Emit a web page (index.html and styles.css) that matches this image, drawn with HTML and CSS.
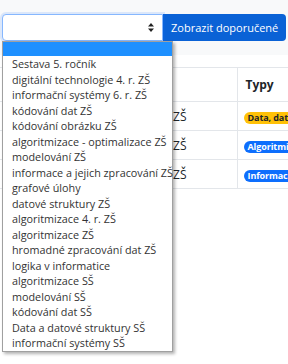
FILE: index.html
```html
<!DOCTYPE html>
<html lang="cs">
  <head>
    <meta charset="UTF-8" />
    <meta name="viewport" content="width=device-width, initial-scale=1.0" />
    <title>Doporučené sestavy</title>
    <link rel="stylesheet" href="styles.css">
  </head>
  <body>
    <div class="page">
      <div class="toolbar">
        <div class="select">
          <svg class="arrows" width="6" height="9" viewBox="0 0 6 9">
            <path d="M3 0 L6 3.5 H0 Z M0 5.5 H6 L3 9 Z" fill="#222" />
          </svg>
        </div>
        <button class="btn">Zobrazit doporučené</button>
      </div>

      <div class="panel">
        <table class="grid">
          <colgroup>
            <col class="col-name" />
            <col class="col-types" />
          </colgroup>
          <thead>
            <tr>
              <th>Název</th>
              <th>Typy</th>
            </tr>
          </thead>
          <tbody>
            <tr>
              <td class="name">Kódování dat ZŠ</td>
              <td><span class="badge yellow">Data, datové struktury</span></td>
            </tr>
            <tr>
              <td class="name">Algoritmizace ZŠ</td>
              <td><span class="badge blue">Algoritmizace</span></td>
            </tr>
            <tr>
              <td class="name">Informační systémy ZŠ</td>
              <td><span class="badge blue">Informace a data</span></td>
            </tr>
          </tbody>
        </table>
      </div>

      <!-- open list of the select -->
      <ul class="dropdown">
        <li class="active">&nbsp;</li>
        <li>Sestava 5. ročník</li>
        <li>digitální technologie 4. r. ZŠ</li>
        <li>informační systémy 6. r. ZŠ</li>
        <li>kódování dat ZŠ</li>
        <li>kódování obrázku ZŠ</li>
        <li>algoritmizace - optimalizace ZŠ</li>
        <li>modelování ZŠ</li>
        <li>informace a jejich zpracování ZŠ</li>
        <li>grafové úlohy</li>
        <li>datové struktury ZŠ</li>
        <li>algoritmizace 4. r. ZŠ</li>
        <li>algoritmizace ZŠ</li>
        <li>hromadné zpracování dat ZŠ</li>
        <li>logika v informatice</li>
        <li>algoritmizace SŠ</li>
        <li>modelování SŠ</li>
        <li>kódování dat SŠ</li>
        <li>Data a datové struktury SŠ</li>
        <li>informační systémy SŠ</li>
      </ul>
    </div>
  </body>
</html>
```

FILE: styles.css
```css
body {
  margin: 0;
  font-family: "Segoe UI", "Open Sans", sans-serif;
  background: #fff;
  color: #212529;
  overflow: hidden;
}
.page {
  position: relative;
  width: 288px;
  height: 364px;
  overflow: hidden;
}
.toolbar {
  display: flex;
  align-items: stretch;
  height: 27px;
  padding: 14px 2px 14px 2px;
  background: #f8f9fa;
}
.select {
  position: relative;
  width: 161px;
  box-sizing: border-box;
  background: #fff;
  border: 1px solid #86b7fe;
  border-radius: 4px 0 0 4px;
  box-shadow: 0 0 0 2px rgba(13, 110, 253, 0.12);
}
.arrows {
  position: absolute;
  right: 8px;
  top: 8px;
}
.btn {
  width: 123px;
  border: none;
  border-radius: 0 4px 4px 0;
  background: #0a62d6;
  color: #fff;
  font-family: inherit;
  font-size: 11px;
  padding: 0 0 0 8px;
  text-align: left;
  white-space: nowrap;
}
.panel {
  background: #fff;
  padding: 12px 0 0 0;
}
.grid {
  border-collapse: collapse;
  table-layout: fixed;
  width: 360px;
  font-size: 12px;
}
.col-name {
  width: 237px;
}
.grid th,
.grid td {
  border: 1px solid #e3e6ea;
  white-space: nowrap;
  overflow: hidden;
  padding: 0 0 0 8px;
  text-align: left;
}
.grid th {
  height: 33px;
  font-weight: 700;
}
.grid td {
  height: 28px;
  padding-left: 6px;
}
.grid th:first-child,
.grid td:first-child {
  border-left: none;
}
.grid .name {
  text-align: right;
  padding: 0 50px 0 0;
}
.badge {
  display: inline-block;
  padding: 0 4px;
  border-radius: 6px;
  font-size: 9px;
  font-weight: 700;
  line-height: 12px;
  letter-spacing: -0.1px;
}
.yellow {
  background: #ffc107;
  color: #212529;
}
.blue {
  background: #0d6efd;
  color: #fff;
}
.dropdown {
  position: absolute;
  left: 2px;
  top: 41px;
  width: 171px;
  margin: 0;
  padding: 0;
  list-style: none;
  box-sizing: border-box;
  background: #fff;
  border: 1px solid #a0a0a0;
  box-shadow: 2px 2px 3px rgba(0, 0, 0, 0.3);
  font-size: 10.8px;
  color: #333;
}
.dropdown li {
  height: 15.5px;
  line-height: 15.5px;
  padding-left: 9px;
  white-space: nowrap;
}
.dropdown li.active {
  background: #1e90ff;
  height: 14px;
}
```
